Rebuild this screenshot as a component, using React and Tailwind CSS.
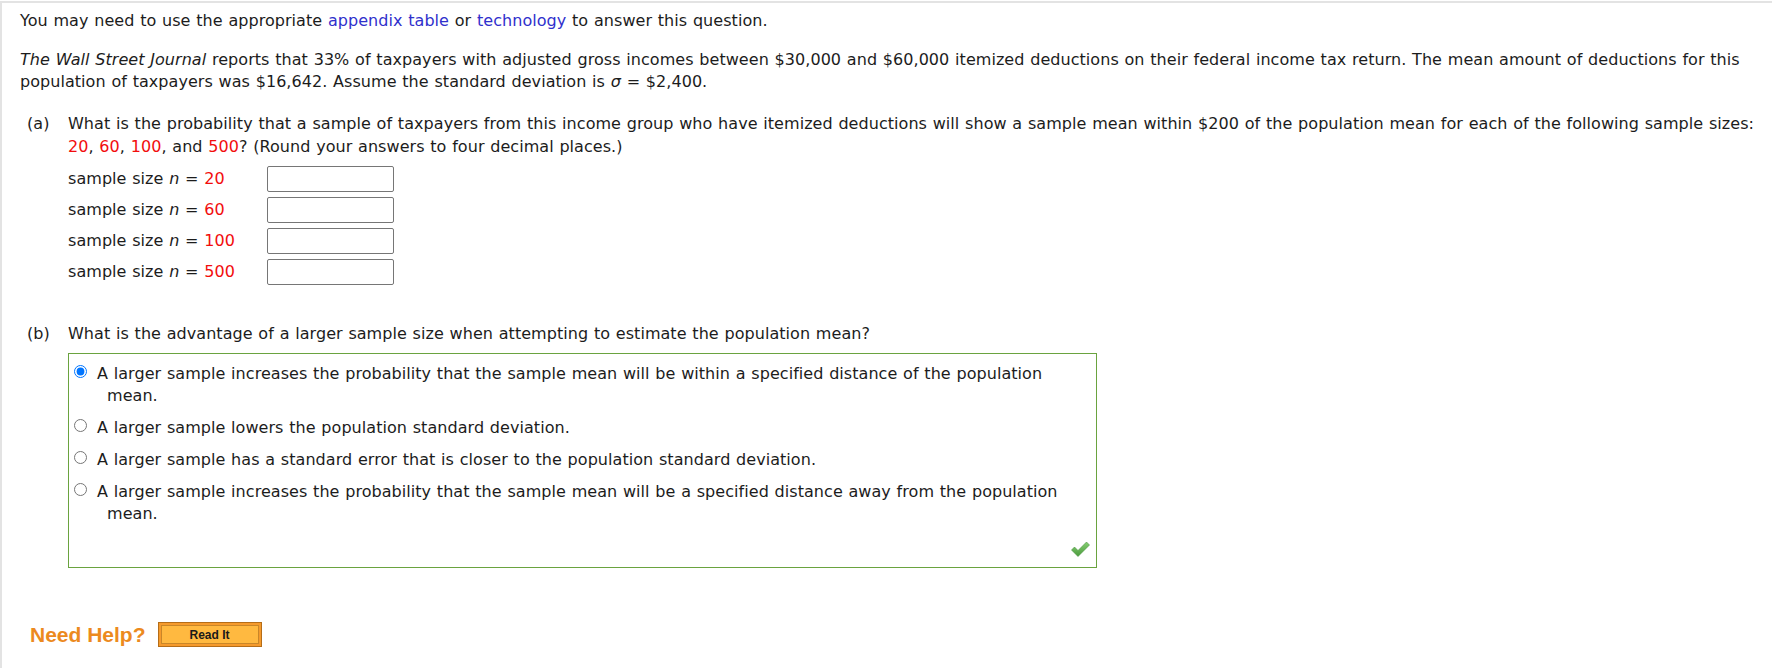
import React from "react";

const samples = [20, 60, 100, 500];

const options = [
  {
    text: "A larger sample increases the probability that the sample mean will be within a specified distance of the population mean.",
    checked: true,
  },
  { text: "A larger sample lowers the population standard deviation." },
  {
    text: "A larger sample has a standard error that is closer to the population standard deviation.",
  },
  {
    text: "A larger sample increases the probability that the sample mean will be a specified distance away from the population mean.",
  },
];

function Red({ children }) {
  return <span className="text-[#f20d0d]">{children}</span>;
}

function Check() {
  return (
    <svg width="19" height="16" viewBox="0 0 19 16">
      <defs>
        <linearGradient id="chk" x1="0" y1="0" x2="0" y2="1">
          <stop offset="0" stopColor="#86cf72" />
          <stop offset="1" stopColor="#4b9a3d" />
        </linearGradient>
      </defs>
      <polygon
        points="0.5,9 3.5,6 7,9.5 15.5,1 18.5,4 7,15.5"
        fill="url(#chk)"
        stroke="#4a9440"
        strokeWidth="0.6"
        strokeLinejoin="round"
      />
    </svg>
  );
}

export default function App() {
  return (
    <div className="min-h-screen bg-white pt-px font-['DejaVu_Sans',sans-serif] text-[16px] tracking-[0.05px] text-[#1c1c1c] [word-spacing:0.6px]">
      <div className="h-[667px] border-t-2 border-l-2 border-[#e3e3e3] pl-[18px] pr-[8px] pt-[7px]">
        <p className="leading-[22px]">
          You may need to use the appropriate{" "}
          <span className="text-[#3030cc]">appendix table</span> or{" "}
          <span className="text-[#3030cc]">technology</span> to answer this
          question.
        </p>

        <p className="mt-[17px] leading-[22px]">
          <i>The Wall Street Journal</i> reports that 33% of taxpayers with
          adjusted gross incomes between $30,000 and $60,000 itemized deductions
          on their federal income tax return. The mean amount of deductions for
          this population of taxpayers was $16,642. Assume the standard
          deviation is <i>σ</i> = $2,400.
        </p>

        {/* part (a) */}
        <div className="mt-[19px] flex leading-[23px]">
          <span className="w-[48px] shrink-0 pl-[7px]">(a)</span>
          <div className="flex-1">
            <p>
              What is the probability that a sample of taxpayers from this
              income group who have itemized deductions will show a sample mean
              within $200 of the population mean for each of the following
              sample sizes:{" "}
              <span className="whitespace-nowrap">
                <Red>20</Red>,
              </span>{" "}
              <Red>60</Red>, <Red>100</Red>, and <Red>500</Red>? (Round your
              answers to four decimal places.)
            </p>
            <div className="mt-[5px]">
              {samples.map((n) => (
                <div key={n} className="flex h-[31px] items-center">
                  <span className="w-[199px]">
                    sample size <i>n</i> = <Red>{n}</Red>
                  </span>
                  <div className="h-[26px] w-[127px] rounded-[2px] border border-[#767676] bg-white" />
                </div>
              ))}
            </div>
          </div>
        </div>

        {/* part (b) */}
        <div className="mt-[36px] flex leading-[22px]">
          <span className="w-[48px] shrink-0 pl-[7px]">(b)</span>
          <div className="flex-1">
            <p>
              What is the advantage of a larger sample size when attempting to
              estimate the population mean?
            </p>
            <div className="mt-[8px] w-[1029px] border border-[#6aa33f] pt-[9px]">
              <div className="flex flex-col gap-[10px]">
                {options.map((o, i) => (
                  <label key={i} className="flex items-start pl-[5px]">
                    <input
                      type="radio"
                      name="b"
                      defaultChecked={!!o.checked}
                      className="mt-[2px] h-[13px] w-[13px] shrink-0 m-0"
                    />
                    <span className="ml-[10px] pl-[10px] -indent-[10px] pr-[20px]">
                      {o.text}
                    </span>
                  </label>
                ))}
              </div>
              <div className="flex justify-end pr-[6px] pb-[10px] pt-[16px]">
                <Check />
              </div>
            </div>
          </div>
        </div>

        {/* help */}
        <div className="mt-[51px] flex items-center pl-[10px]">
          <span className="font-['Liberation_Sans',Arial,sans-serif] text-[21px] font-bold tracking-normal text-[#ec8a1e] [word-spacing:0px]">
            Need Help?
          </span>
          <div className="ml-[12px] border border-[#b56d18] bg-[#f59a2c] p-[2px]">
            <div className="flex h-[19px] w-[98px] items-center justify-center border border-[#c98628] bg-[#ffb940] font-['Liberation_Sans',Arial,sans-serif] text-[12px] font-bold tracking-normal text-[#1a1a1a] [word-spacing:0px]">
              Read It
            </div>
          </div>
        </div>
      </div>
    </div>
  );
}
